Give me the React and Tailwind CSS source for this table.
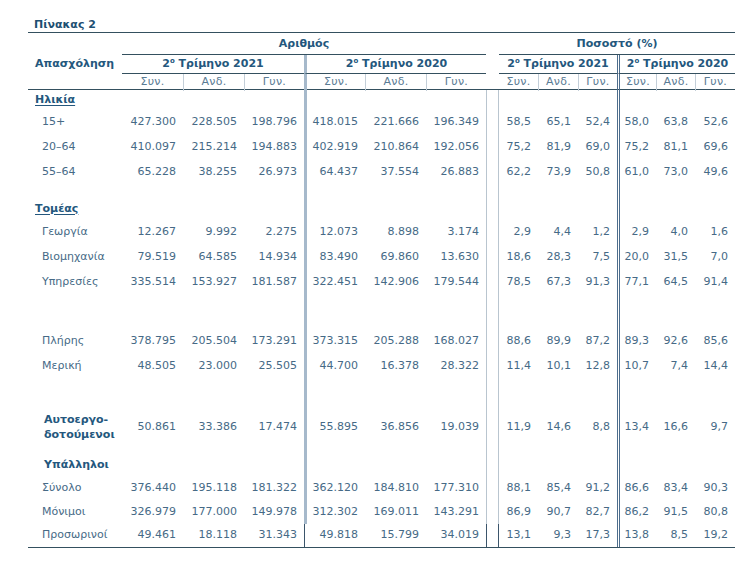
import React from "react";

const GRID =
  "grid grid-cols-[94px_61px_61px_60px_61px_61px_60px_13px_39px_40px_39px_39px_39px_40px]";

const rows = [
  { type: "head", label: "Ηλικία", h: "h-[20px]" },
  { label: "15+", h: "h-[25px]", n: ["427.300", "228.505", "198.796", "418.015", "221.666", "196.349"], p: ["58,5", "65,1", "52,4", "58,0", "63,8", "52,6"] },
  { label: "20–64", h: "h-[25px]", n: ["410.097", "215.214", "194.883", "402.919", "210.864", "192.056"], p: ["75,2", "81,9", "69,0", "75,2", "81,1", "69,6"] },
  { label: "55–64", h: "h-[25px]", n: ["65.228", "38.255", "26.973", "64.437", "37.554", "26.883"], p: ["62,2", "73,9", "50,8", "61,0", "73,0", "49,6"] },
  { type: "blank", h: "h-[13px]" },
  { type: "head", label: "Τομέας", h: "h-[22px]" },
  { label: "Γεωργία", h: "h-[25px]", n: ["12.267", "9.992", "2.275", "12.073", "8.898", "3.174"], p: ["2,9", "4,4", "1,2", "2,9", "4,0", "1,6"] },
  { label: "Βιομηχανία", h: "h-[25px]", n: ["79.519", "64.585", "14.934", "83.490", "69.860", "13.630"], p: ["18,6", "28,3", "7,5", "20,0", "31,5", "7,0"] },
  { label: "Υπηρεσίες", h: "h-[25px]", n: ["335.514", "153.927", "181.587", "322.451", "142.906", "179.544"], p: ["78,5", "67,3", "91,3", "77,1", "64,5", "91,4"] },
  { type: "blank", h: "h-[34px]" },
  { label: "Πλήρης", h: "h-[25px]", n: ["378.795", "205.504", "173.291", "373.315", "205.288", "168.027"], p: ["88,6", "89,9", "87,2", "89,3", "92,6", "85,6"] },
  { label: "Μερική", h: "h-[25px]", n: ["48.505", "23.000", "25.505", "44.700", "16.378", "28.322"], p: ["11,4", "10,1", "12,8", "10,7", "7,4", "14,4"] },
  { type: "blank", h: "h-[31px]" },
  { type: "self", h: "h-[34px]", n: ["50.861", "33.386", "17.474", "55.895", "36.856", "19.039"], p: ["11,9", "14,6", "8,8", "13,4", "16,6", "9,7"] },
  { type: "blank", h: "h-[10px]" },
  { type: "sub", label: "Υπάλληλοι", h: "h-[22px]" },
  { label: "Σύνολο", h: "h-[24px]", n: ["376.440", "195.118", "181.322", "362.120", "184.810", "177.310"], p: ["88,1", "85,4", "91,2", "86,6", "83,4", "90,3"] },
  { label: "Μόνιμοι", h: "h-[24px]", n: ["326.979", "177.000", "149.978", "312.302", "169.011", "143.291"], p: ["86,9", "90,7", "82,7", "86,2", "91,5", "80,8"] },
  { label: "Προσωρινοί", h: "h-[24px]", last: true, n: ["49.461", "18.118", "31.343", "49.818", "15.799", "34.019"], p: ["13,1", "9,3", "17,3", "13,8", "8,5", "19,2"] },
];

function Label({ r }) {
  if (r.type === "head")
    return (
      <div className="flex items-center pl-[7px] font-bold text-[#24577d] underline underline-offset-2">
        {r.label}
      </div>
    );
  if (r.type === "sub")
    return <div className="flex items-center pl-[16px] font-bold text-[#24577d]">{r.label}</div>;
  if (r.type === "self")
    return (
      <div className="flex flex-col justify-center pl-[16px] font-bold text-[#24577d] leading-[15px]">
        <span>Αυτοεργο-</span>
        <span>δοτούμενοι</span>
      </div>
    );
  if (r.type === "blank") return <div />;
  return <div className="flex items-center pl-[14px]">{r.label}</div>;
}

function DataRow({ r }) {
  const n = r.n || ["", "", "", "", "", ""];
  const p = r.p || ["", "", "", "", "", ""];
  const cell = "flex items-center justify-end pr-[7px]";
  const thick = r.last ? "border-l border-[#3b556b]" : "border-l-[3px] border-[#a6b9cb]";
  const gap = r.last ? "border-x border-[#3b556b]" : "border-x border-[#b9c5cf]";
  return (
    <div className={`${GRID} ${r.h} ${r.last ? "border-b border-[#34505f]" : ""}`}>
      <Label r={r} />
      <div className={cell}>{n[0]}</div>
      <div className={cell}>{n[1]}</div>
      <div className={cell}>{n[2]}</div>
      <div className={`${cell} ${thick}`}>{n[3]}</div>
      <div className={cell}>{n[4]}</div>
      <div className={cell}>{n[5]}</div>
      <div className={gap} />
      <div className={cell}>{p[0]}</div>
      <div className={cell}>{p[1]}</div>
      <div className={cell}>{p[2]}</div>
      <div className={`${cell} border-l-[3px] border-double border-[#4e6e8d]`}>{p[3]}</div>
      <div className={cell}>{p[4]}</div>
      <div className={cell}>{p[5]}</div>
    </div>
  );
}

function Quarter({ year }) {
  return (
    <span>
      2<sup className="text-[7px] font-bold top-[-0.6em]">ο</sup> Τρίμηνο {year}
    </span>
  );
}

export default function App() {
  const sub = "flex items-center justify-center";
  const sep = "border-l border-[#c3ced8]";
  return (
    <div
      className="w-[754px] h-[570px] bg-white text-[11px] text-[#466a86]"
      style={{ fontFamily: '"DejaVu Sans", Verdana, sans-serif' }}
    >
      <div className="ml-[28px] w-[707px] pt-[18px]">
        <div className="h-[15px] leading-[14px] border-b border-[#34505f] pl-[6px] font-bold text-[#1d4f72]">
          Πίνακας 2
        </div>

        {/* Row A */}
        <div className={`${GRID} h-[22px] font-bold text-[#24577d]`}>
          <div />
          <div className="col-span-6 flex items-center justify-center border-b border-[#34505f] pt-[1px]">
            Αριθμός
          </div>
          <div />
          <div className="col-span-6 flex items-center justify-center border-b border-[#34505f] pt-[1px]">
            Ποσοστό (%)
          </div>
        </div>

        {/* Row B */}
        <div className={`${GRID} h-[19px] font-bold text-[#24577d]`}>
          <div className="flex items-center pl-[7px]">Απασχόληση</div>
          <div className="col-span-3 flex items-center justify-center border-b border-[#34505f]">
            <Quarter year="2021" />
          </div>
          <div className="col-span-3 flex items-center justify-center border-b border-[#34505f] border-l-[3px] border-l-[#a6b9cb]">
            <Quarter year="2020" />
          </div>
          <div />
          <div className="col-span-3 flex items-center justify-center border-b border-[#34505f]">
            <Quarter year="2021" />
          </div>
          <div className="col-span-3 flex items-center justify-center border-b border-[#34505f] border-l-[3px] border-double border-l-[#4e6e8d]">
            <Quarter year="2020" />
          </div>
        </div>

        {/* Row C */}
        <div className={`${GRID} h-[16px] border-b border-[#34505f] text-[#5a7b94] tracking-[0.3px]`}>
          <div />
          <div className={sub}>Συν.</div>
          <div className={`${sub} ${sep}`}>Ανδ.</div>
          <div className={`${sub} ${sep}`}>Γυν.</div>
          <div className={`${sub} border-l-[3px] border-[#a6b9cb]`}>Συν.</div>
          <div className={`${sub} ${sep}`}>Ανδ.</div>
          <div className={`${sub} ${sep}`}>Γυν.</div>
          <div />
          <div className={sub}>Συν.</div>
          <div className={`${sub} ${sep}`}>Ανδ.</div>
          <div className={`${sub} ${sep}`}>Γυν.</div>
          <div className={`${sub} border-l-[3px] border-double border-[#4e6e8d]`}>Συν.</div>
          <div className={`${sub} ${sep}`}>Ανδ.</div>
          <div className={`${sub} ${sep}`}>Γυν.</div>
        </div>

        {rows.map((r, i) => (
          <DataRow key={i} r={r} />
        ))}
      </div>
    </div>
  );
}
